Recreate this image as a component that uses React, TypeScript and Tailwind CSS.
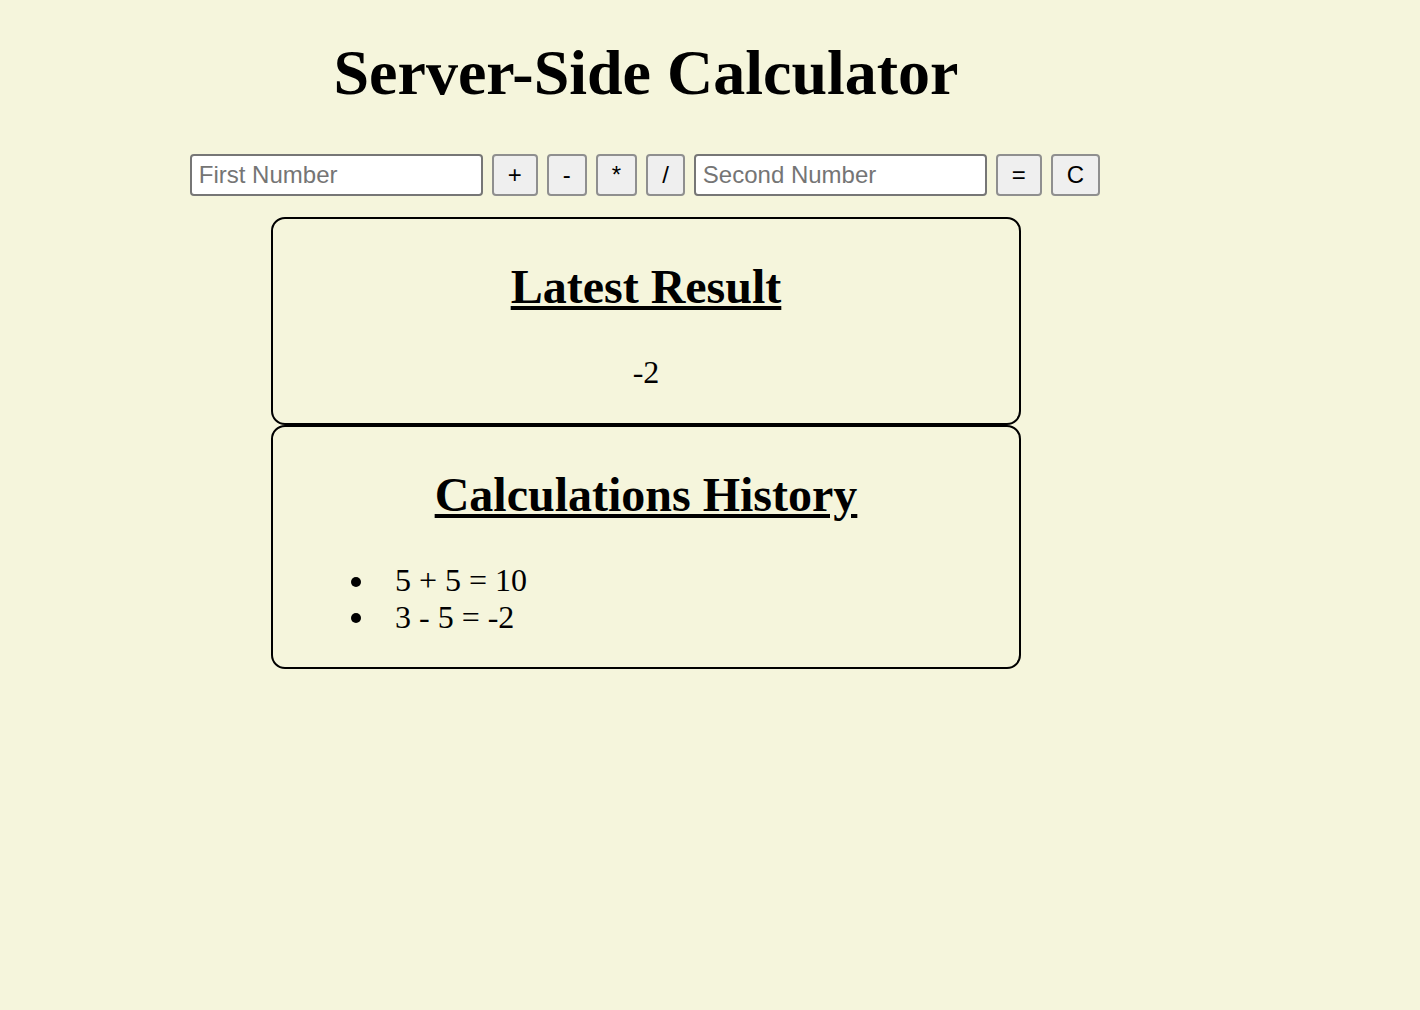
import { useState } from 'react';

const history = ['5 + 5 = 10', '3 - 5 = -2'];
const ops = ['+', '-', '*', '/'];

function OpButton({ label }: { label: string }) {
  return (
    <button className="h-[42px] px-[14px] rounded-[4px] border-2 border-[#8f8f8f] bg-[#efefef] text-[24px] text-black font-['Liberation_Sans',Arial,sans-serif] leading-none">
      {label}
    </button>
  );
}

export default function App() {
  const [first, setFirst] = useState('');
  const [second, setSecond] = useState('');

  return (
    <div className="min-h-[1010px] w-full bg-[#f5f5dc] text-black font-['Liberation_Serif','Times_New_Roman',serif] text-[32px]">
      <div className="w-[1292px] flex flex-col items-center pt-[36px]">
        <h1 className="text-[64px] font-bold leading-[1.15] mb-[44px]">Server-Side Calculator</h1>

        {/* Calculator inputs */}
        <div className="flex items-center gap-[9px] h-[42px] -ml-[2px]">
          <input
            value={first}
            onChange={(e) => setFirst(e.target.value)}
            placeholder="First Number"
            className="w-[293px] h-[42px] px-[7px] rounded-[4px] border-2 border-[#767676] bg-white text-[24px] font-['Liberation_Sans',Arial,sans-serif] placeholder:text-[#757575] outline-none"
          />
          {ops.map((op) => (
            <OpButton key={op} label={op} />
          ))}
          <input
            value={second}
            onChange={(e) => setSecond(e.target.value)}
            placeholder="Second Number"
            className="w-[293px] h-[42px] px-[7px] rounded-[4px] border-2 border-[#767676] bg-white text-[24px] font-['Liberation_Sans',Arial,sans-serif] placeholder:text-[#757575] outline-none"
          />
          <OpButton label="=" />
          <OpButton label="C" />
        </div>

        {/* Result cards */}
        <section className="w-[750px] mt-[21px] border-2 border-black rounded-[14px] text-center">
          <h2 className="text-[48px] font-bold underline leading-[1.15] my-[40px]">Latest Result</h2>
          <p className="leading-[1.15] my-[32px]">-2</p>
        </section>
        <section className="w-[750px] border-2 border-black rounded-[14px]">
          <h2 className="text-[48px] font-bold underline leading-[1.15] mt-[40px] text-center">Calculations History</h2>
          <ul className="pl-[78px] mt-[40px] mb-[32px] leading-[1.15]">
            {history.map((item) => (
              <li key={item} className="flex">
                <span className="w-[44px] flex items-center">
                  <span className="w-[10px] h-[10px] mt-[3px] rounded-full bg-black" />
                </span>
                <span>{item}</span>
              </li>
            ))}
          </ul>
        </section>
      </div>
    </div>
  );
}
